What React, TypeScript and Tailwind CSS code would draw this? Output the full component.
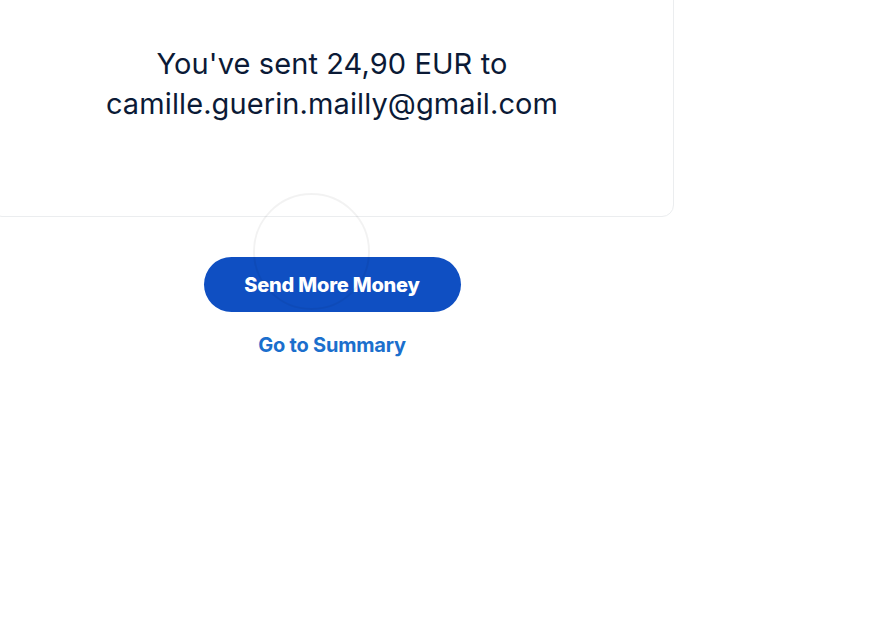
export default function App() {
  return (
    <div className="relative min-h-[621px] w-[871px] overflow-hidden bg-white" style={{ fontFamily: "Inter, 'Noto Sans', sans-serif" }}>
      <div className="ml-[-10px] flex w-[684px] flex-col items-center">
        <div className="mt-[-20px] w-full rounded-xl border border-[#ebedef] bg-white pb-[92px] pt-[63px] text-center">
          <p className="text-[29px] leading-[40px] tracking-[0.1px] text-[#0b1a36]">
            You've sent 24,90 EUR to
            <br />
            camille.guerin.mailly@gmail.com
          </p>
        </div>
        <button className="mt-[40px] flex h-[55px] w-[257px] items-center justify-center rounded-full bg-[#0f4fc2] text-[20px] font-extrabold tracking-[-0.2px] text-white">
          Send More Money
        </button>
        <a className="mt-[20px] text-[20px] font-bold leading-[26px] tracking-[-0.2px] text-[#1b6fcd]">Go to Summary</a>
      </div>
      <div className="pointer-events-none absolute left-[253px] top-[193px] h-[117px] w-[117px] rounded-full border-2 border-[rgba(0,0,0,0.05)]" />
    </div>
  );
}
